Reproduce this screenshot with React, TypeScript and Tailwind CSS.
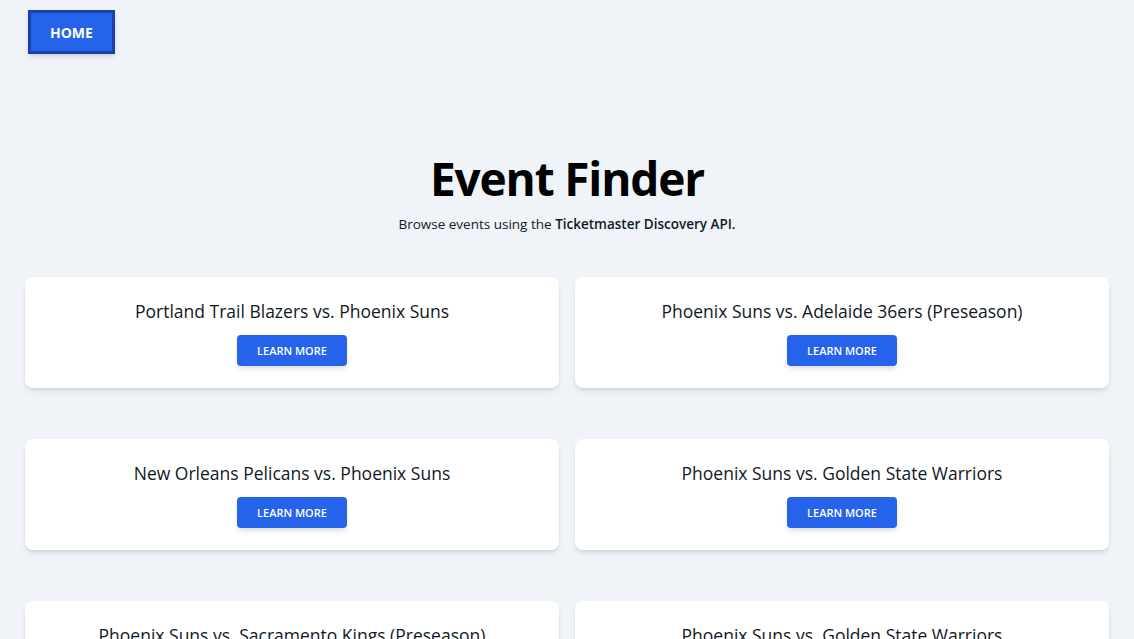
const events = [
  "Portland Trail Blazers vs. Phoenix Suns",
  "Phoenix Suns vs. Adelaide 36ers (Preseason)",
  "New Orleans Pelicans vs. Phoenix Suns",
  "Phoenix Suns vs. Golden State Warriors",
  "Phoenix Suns vs. Sacramento Kings (Preseason)",
  "Phoenix Suns vs. Golden State Warriors",
];

export default function App() {
  return (
    <div className="min-h-screen bg-[#f0f4f8] text-gray-900 font-['Open_Sans',sans-serif]">
      <nav className="px-7 pt-2.5">
        <button className="bg-[#2563eb] border-[3px] border-[#1e40af] text-white font-bold text-sm px-[19px] pt-[10px] pb-[8px] shadow-md">
          HOME
        </button>
      </nav>

      <header className="text-center pt-[100px]">
        <h1 className="text-[46px] leading-[48px] font-bold tracking-tight text-black">Event Finder</h1>
        <p className="text-[13.5px] mt-3">
          Browse events using the <span className="font-semibold">Ticketmaster Discovery API.</span>
        </p>
      </header>

      <main className="grid grid-cols-2 gap-x-4 gap-y-[51px] px-[25px] mt-[43px]">
        {events.map((name, i) => (
          <div key={i} className="bg-white rounded-lg shadow-md pt-5 pb-[22px] text-center">
            <h2 className="text-[17.5px] leading-7 mb-[10px]">{name}</h2>
            <button className="bg-[#2563eb] text-white text-[11px] font-semibold w-[110px] h-[31px] rounded shadow-md">
              LEARN MORE
            </button>
          </div>
        ))}
      </main>
    </div>
  );
}
